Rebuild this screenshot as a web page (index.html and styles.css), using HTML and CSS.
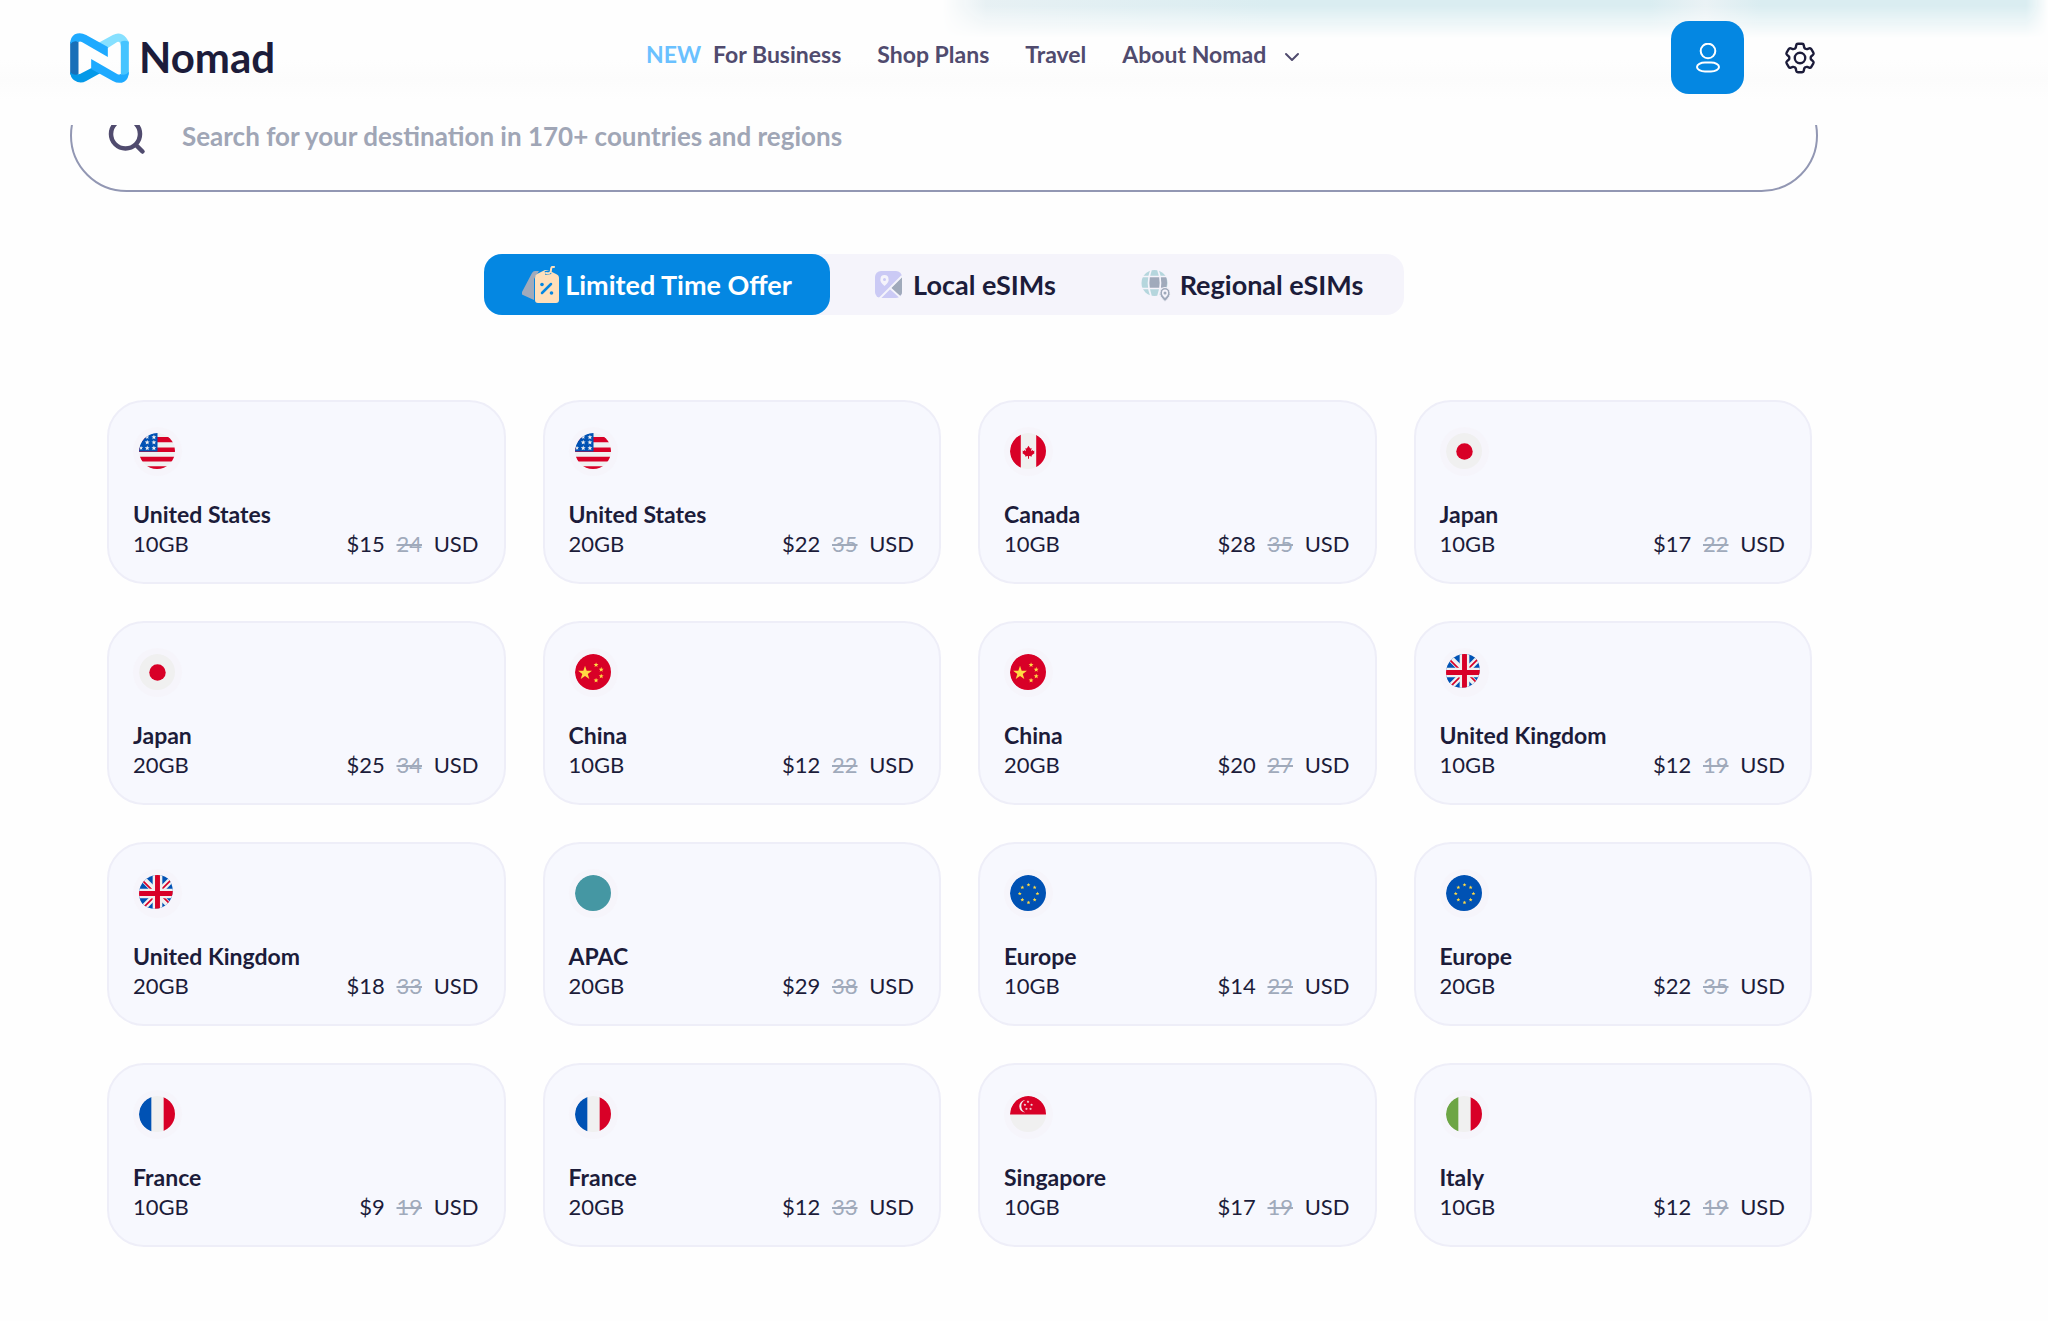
FILE: index.html
```
<!DOCTYPE html>
<html lang="en">
<head>
<meta charset="utf-8">
<meta name="viewport" content="width=device-width, initial-scale=1">
<title>Nomad eSIM</title>
<link rel="stylesheet" href="styles.css">
</head>
<body>
<svg class="sprite" aria-hidden="true">
  <symbol id="star" viewBox="0 0 20 20"><path d="M10 0l2.4 7 7.6.2-6.1 4.7 2.3 7.1-6.2-4.2L3.800 19l2.300-7.100L0 7.200 7.600 7z"/></symbol>
  <symbol id="us" viewBox="0 0 36 36">
    <path fill="#f0f0f0" d="M0 0h36v36H0z"/>
    <path fill="#d80027" d="M0 4h36v5H0zM0 14h36v4.500H0zM0 23h36v4.700H0zM0 32.400h36V36H0z"/>
    <path fill="#0052b4" d="M0 0h18v18H0z"/>
    <g fill="#f0f0f0"><use href="#star" x="12" y="1.500" width="5" height="5"/><use href="#star" x="6" y="2" width="4" height="4"/><use href="#star" x="5.500" y="6.500" width="5" height="5"/><use href="#star" x="12" y="6.500" width="5" height="5"/><use href="#star" x="0" y="12.500" width="4" height="4"/><use href="#star" x="5.500" y="12" width="5" height="5"/><use href="#star" x="12" y="12" width="5" height="5"/></g>
  </symbol>
  <symbol id="ca" viewBox="0 0 36 36">
    <path fill="#f0f0f0" d="M0 0h36v36H0z"/>
    <path fill="#d80027" d="M0 0h10.500v36H0zM25.500 0H36v36H25.500zM18 12.500l-1.700 2.700-1.300-.5.500 3-1.500-1.200-.5 1-1.500-.3.700 1.500-.8.700 3 2.200-.3 1.200 2.900-.4V25h1v-2.600l2.900.4-.3-1.200 3-2.200-.8-.7.700-1.500-1.500.3-.5-1-1.500 1.200.5-3-1.300.5z"/>
  </symbol>
  <symbol id="jp" viewBox="0 0 36 36"><path fill="#f0f0f0" d="M0 0h36v36H0z"/><circle cx="18" cy="18" r="8" fill="#d80027"/></symbol>
  <symbol id="cn" viewBox="0 0 36 36">
    <path fill="#d80027" d="M0 0h36v36H0z"/>
    <g fill="#ffda44"><use href="#star" x="3" y="11.500" width="13.500" height="13.500"/><use href="#star" x="18" y="8" width="5" height="5"/><use href="#star" x="23" y="12.500" width="5" height="5"/><use href="#star" x="23" y="19" width="5" height="5"/><use href="#star" x="18" y="23" width="5" height="5"/></g>
  </symbol>
  <symbol id="gb" viewBox="0 0 36 36">
    <path fill="#0052b4" d="M0 0h36v36H0z"/>
    <path stroke="#f0f0f0" stroke-width="6" d="M0 0l36 36M36 0L0 36"/>
    <path stroke="#d80027" stroke-width="1.600" d="M4 6l10 10M32 4L21 15M32 30L22 20M4 32l11-11"/>
    <path fill="#f0f0f0" d="M13.300 0h9.400v13.300H36v9.400H22.700V36h-9.400V22.700H0v-9.400h13.300z"/>
    <path fill="#d80027" d="M15.600 0h4.800v15.600H36v4.800H20.400V36h-4.800V20.400H0v-4.800h15.600z"/>
  </symbol>
  <symbol id="apac" viewBox="0 0 36 36"><path fill="#4597a3" d="M0 0h36v36H0z"/></symbol>
  <symbol id="eu" viewBox="0 0 36 36">
    <path fill="#0052b4" d="M0 0h36v36H0z"/>
    <g fill="#ffda44"><use href="#star" x="16" y="7.500" width="4" height="4"/><use href="#star" x="22" y="10" width="4" height="4"/><use href="#star" x="24.700" y="16" width="4" height="4"/><use href="#star" x="22" y="22" width="4" height="4"/><use href="#star" x="16" y="24.700" width="4" height="4"/><use href="#star" x="10" y="22" width="4" height="4"/><use href="#star" x="7.500" y="16" width="4" height="4"/><use href="#star" x="10" y="10" width="4" height="4"/></g>
  </symbol>
  <symbol id="fr" viewBox="0 0 36 36"><path fill="#f0f0f0" d="M0 0h36v36H0z"/><path fill="#0052b4" d="M0 0h12v36H0z"/><path fill="#d80027" d="M24 0h12v36H24z"/></symbol>
  <symbol id="it" viewBox="0 0 36 36"><path fill="#f0f0f0" d="M0 0h36v36H0z"/><path fill="#6da544" d="M0 0h12v36H0z"/><path fill="#d80027" d="M24 0h12v36H24z"/></symbol>
  <symbol id="sg" viewBox="0 0 36 36">
    <path fill="#f0f0f0" d="M0 0h36v36H0z"/><path fill="#d80027" d="M0 0h36v18H0z"/>
    <path fill="#f0f0f0" d="M15 4a6 6 0 1 0 0 12 6.500 6.500 0 0 1 0-12z"/>
    <g fill="#f0f0f0"><use href="#star" x="16" y="4" width="3" height="3"/><use href="#star" x="13" y="7" width="3" height="3"/><use href="#star" x="19.500" y="7" width="3" height="3"/><use href="#star" x="14.500" y="11" width="3" height="3"/><use href="#star" x="18.500" y="11" width="3" height="3"/></g>
  </symbol>
</svg>

<header class="header">
  <a class="logo" href="#" aria-label="Nomad home">
    <svg class="logo-mark" viewBox="0 0 176 150" aria-hidden="true">
      <path fill="#86e0ff" d="M84 30l44-24q22-12 40 8 8 8 8 20l-24 4q-2-14-11-11L112 46z"/>
      <path fill="#46c4ff" d="M152 26q12-6 24 0v98q-10 10-24 0z"/>
      <path fill="#196fb8" d="M0 28q12-10 25-2v98q-12 10-25 0z"/>
      <path fill="#0499e8" d="M0 116q8 12 25 8 4 0 10-4l29-15 26 16-42 23q-18 10-36-2Q0 132 0 116z"/>
      <path id="ribbon" fill="#1eaaff" d="M0 34Q0 12 14 4q16-8 34 2l65 36v30L35 27q-6-3-10 0Q10 20 0 34z"/>
      <use href="#ribbon" transform="rotate(180 88 75)"/>
    </svg>
    <span>Nomad</span>
  </a>
  <nav class="nav" aria-label="Main">
    <a href="#"><span class="new">NEW</span> For Business</a>
    <a href="#">Shop Plans</a>
    <a href="#">Travel</a>
    <a href="#">About Nomad
      <svg class="chevron" viewBox="0 0 16 16" fill="none" stroke="currentColor" stroke-width="2" stroke-linecap="round" stroke-linejoin="round" aria-hidden="true"><path d="M2 5l6 6 6-6"/></svg>
    </a>
  </nav>
  <div class="actions">
    <button class="account" type="button" aria-label="Account">
      <svg viewBox="0 0 26 30" fill="none" stroke="#fff" stroke-width="2" aria-hidden="true"><circle cx="13" cy="8" r="7.300"/><rect x="2" y="19.500" width="22" height="9" rx="8" ry="4.500"/></svg>
    </button>
    <button class="settings" type="button" aria-label="Settings">
      <svg viewBox="0 0 24 24" fill="none" stroke="#1c1c3a" stroke-width="1.500" stroke-linejoin="round" aria-hidden="true"><path d="M9.594 3.940c.09-.542.56-.94 1.110-.94h2.593c.55 0 1.020.398 1.110.94l.213 1.281c.063.374.313.686.645.87.074.04.147.083.22.127.325.196.72.257 1.075.124l1.217-.456a1.125 1.125 0 0 1 1.370.49l1.296 2.247a1.125 1.125 0 0 1-.26 1.431l-1.003.827c-.293.241-.438.613-.43.992a7.723 7.723 0 0 1 0 .255c-.008.378.137.75.43.991l1.004.827c.424.35.534.955.26 1.430l-1.298 2.247a1.125 1.125 0 0 1-1.369.491l-1.217-.456c-.355-.133-.75-.072-1.076.124a6.470 6.470 0 0 1-.22.128c-.331.183-.581.495-.644.869l-.213 1.281c-.09.543-.56.94-1.110.94h-2.594c-.55 0-1.019-.398-1.110-.94l-.213-1.281c-.062-.374-.312-.686-.644-.87a6.520 6.520 0 0 1-.22-.127c-.325-.196-.72-.257-1.076-.124l-1.217.456a1.125 1.125 0 0 1-1.369-.49l-1.297-2.247a1.125 1.125 0 0 1 .26-1.431l1.004-.827c.292-.24.437-.613.43-.991a6.932 6.932 0 0 1 0-.255c.007-.38-.138-.751-.43-.992l-1.004-.827a1.125 1.125 0 0 1-.26-1.430l1.297-2.247a1.125 1.125 0 0 1 1.370-.491l1.216.456c.356.133.751.072 1.076-.124.072-.044.146-.086.22-.128.332-.183.582-.495.644-.869l.214-1.280Z"/><circle cx="12" cy="12" r="3.300"/></svg>
    </button>
  </div>
</header>

<main class="main">
  <form class="search" role="search">
    <label class="search-icon" for="destination" aria-label="Destination">
      <svg viewBox="0 0 38 38" fill="none" stroke="#504b6e" stroke-width="4.500" stroke-linecap="round" aria-hidden="true"><circle cx="17.500" cy="17" r="14.500"/><path d="M28.500 28.500l6 6"/></svg>
    </label>
    <input id="destination" type="text" placeholder="Search for your destination in 170+ countries and regions">
  </form>

  <div class="tabs">
    <button class="tab active" type="button">
      <svg class="tab-icon" viewBox="0 0 37 37" aria-hidden="true">
        <path fill="#a0aabb" d="M13 5h4L12 13v21L1 29q-2-1-1-3L10 7q1-2 3-2z"/>
        <path fill="#ffdfba" d="M15 8l8-4h3l8 4q3 1 3 4v22q0 3-3 3H16q-3 0-3-3V12q0-3 2-4z"/>
        <path fill="none" stroke="#0487e2" stroke-width="4" d="M23 7l6-1"/>
        <path fill="none" stroke="#ffdfba" stroke-width="2" stroke-linecap="round" d="M24 7q5 1 5-3t3-3"/>
        <path fill="none" stroke="#0487e2" stroke-width="2.500" stroke-linecap="round" d="M20 27l9-9"/>
        <circle cx="20" cy="18.500" r="1.800" fill="#0487e2"/><circle cx="29.500" cy="27" r="1.800" fill="#0487e2"/>
      </svg>
      Limited Time Offer
    </button>
    <button class="tab" type="button">
      <svg class="tab-icon" viewBox="0 0 37 37" aria-hidden="true">
        <rect x="5" y="5" width="27" height="27" rx="6" fill="#cbcaf5"/>
        <path fill="#a0aabb" d="M32 11v15q0 3-3 4l-8-8z"/>
        <path fill="none" stroke="#f5f4fb" stroke-width="1.800" d="M32 10L9 33M20 22l10 9"/>
        <path fill="#f5f4fb" d="M14.500 20q-5-4-4-7a4 4 0 0 1 8 0q1 3-4 7z"/><circle cx="14.500" cy="13.500" r="1.500" fill="#cbcaf5"/>
      </svg>
      Local eSIMs
    </button>
    <button class="tab" type="button">
      <svg class="tab-icon" viewBox="0 0 37 37" aria-hidden="true">
        <circle cx="17.500" cy="17" r="13" fill="#b5d6dd"/>
        <path fill="#a0aabb" d="M12 11h11v11H12zM24 11h5q2 6 0 11h-5z"/>
        <path fill="none" stroke="#f5f4fb" stroke-width="1.700" d="M4 10.500h27M4 22.500h27M14 4Q9 17 14 30M21 4Q26 17 21 30"/>
        <path fill="#a0aabb" stroke="#f5f4fb" d="M28 35.500q-6-5-5-9a5 5 0 0 1 10 0q1 4-5 9z"/>
        <path fill="#f5f4fb" d="M28 32q-3.500-3-3-5.500a3 3 0 0 1 6 0Q31.500 29 28 32z"/><circle cx="28" cy="27" r="1.500" fill="#a0aabb"/>
      </svg>
      Regional eSIMs
    </button>
  </div>

  <ul class="plans">
    <li><a class="plan" href="#"><svg class="flag" aria-hidden="true"><use href="#us"/></svg><h3>United States</h3><p><span>10GB</span><span class="price">$15 <s>24</s> USD</span></p></a></li>
    <li><a class="plan" href="#"><svg class="flag" aria-hidden="true"><use href="#us"/></svg><h3>United States</h3><p><span>20GB</span><span class="price">$22 <s>35</s> USD</span></p></a></li>
    <li><a class="plan" href="#"><svg class="flag" aria-hidden="true"><use href="#ca"/></svg><h3>Canada</h3><p><span>10GB</span><span class="price">$28 <s>35</s> USD</span></p></a></li>
    <li><a class="plan" href="#"><svg class="flag" aria-hidden="true"><use href="#jp"/></svg><h3>Japan</h3><p><span>10GB</span><span class="price">$17 <s>22</s> USD</span></p></a></li>
    <li><a class="plan" href="#"><svg class="flag" aria-hidden="true"><use href="#jp"/></svg><h3>Japan</h3><p><span>20GB</span><span class="price">$25 <s>34</s> USD</span></p></a></li>
    <li><a class="plan" href="#"><svg class="flag" aria-hidden="true"><use href="#cn"/></svg><h3>China</h3><p><span>10GB</span><span class="price">$12 <s>22</s> USD</span></p></a></li>
    <li><a class="plan" href="#"><svg class="flag" aria-hidden="true"><use href="#cn"/></svg><h3>China</h3><p><span>20GB</span><span class="price">$20 <s>27</s> USD</span></p></a></li>
    <li><a class="plan" href="#"><svg class="flag" aria-hidden="true"><use href="#gb"/></svg><h3>United Kingdom</h3><p><span>10GB</span><span class="price">$12 <s>19</s> USD</span></p></a></li>
    <li><a class="plan" href="#"><svg class="flag" aria-hidden="true"><use href="#gb"/></svg><h3>United Kingdom</h3><p><span>20GB</span><span class="price">$18 <s>33</s> USD</span></p></a></li>
    <li><a class="plan" href="#"><svg class="flag" aria-hidden="true"><use href="#apac"/></svg><h3>APAC</h3><p><span>20GB</span><span class="price">$29 <s>38</s> USD</span></p></a></li>
    <li><a class="plan" href="#"><svg class="flag" aria-hidden="true"><use href="#eu"/></svg><h3>Europe</h3><p><span>10GB</span><span class="price">$14 <s>22</s> USD</span></p></a></li>
    <li><a class="plan" href="#"><svg class="flag" aria-hidden="true"><use href="#eu"/></svg><h3>Europe</h3><p><span>20GB</span><span class="price">$22 <s>35</s> USD</span></p></a></li>
    <li><a class="plan" href="#"><svg class="flag" aria-hidden="true"><use href="#fr"/></svg><h3>France</h3><p><span>10GB</span><span class="price">$9 <s>19</s> USD</span></p></a></li>
    <li><a class="plan" href="#"><svg class="flag" aria-hidden="true"><use href="#fr"/></svg><h3>France</h3><p><span>20GB</span><span class="price">$12 <s>33</s> USD</span></p></a></li>
    <li><a class="plan" href="#"><svg class="flag" aria-hidden="true"><use href="#sg"/></svg><h3>Singapore</h3><p><span>10GB</span><span class="price">$17 <s>19</s> USD</span></p></a></li>
    <li><a class="plan" href="#"><svg class="flag" aria-hidden="true"><use href="#it"/></svg><h3>Italy</h3><p><span>10GB</span><span class="price">$12 <s>19</s> USD</span></p></a></li>
  </ul>
</main>
</body>
</html>
```

FILE: styles.css
```
* { box-sizing: border-box; }

body {
  margin: 0;
  background: #fefefe;
  color: #1c1c3a;
  font-family: Lato, "Liberation Sans", sans-serif;
  font-size: 22px;
  line-height: 29px;
}

a { color: inherit; text-decoration: none; }
button { border: 0; padding: 0; background: none; color: inherit; font: inherit; cursor: pointer; }
svg { display: block; }
.sprite { position: absolute; width: 0; height: 0; }

/* Sticky header, lies over the search box */
.header {
  position: sticky;
  top: 0;
  z-index: 2;
  display: flex;
  align-items: flex-start;
  height: 125px;
  padding: 21px 229px 0 70px;
  background: linear-gradient(#fefefe 60px, #fcfcfc 80px, #fefefe 100px);
}

.header::before {
  content: "";
  position: absolute;
  z-index: -1;
  inset: 0 0 auto 46%;
  height: 40px;
  background: linear-gradient(90deg, #e9f1f4, #daedf1 30%, #daedf1 64%, #eaf2f5 69%, #daedf1 74%);
  mask-image: linear-gradient(#000 6px, transparent 38px), linear-gradient(90deg, transparent, #000 4%, #000 98%, transparent);
  mask-composite: intersect;
}

.logo {
  display: flex;
  align-items: center;
  gap: 10px;
  height: 73px;
  font-size: 42px;
  font-weight: 700;
}
.logo-mark { width: 59px; height: 50px; }

.nav {
  flex: 1;
  display: flex;
  justify-content: center;
  gap: 36px;
  padding-top: 19px;
  color: #504b6e;
  font-size: 23px;
  font-weight: 700;
}
.nav a { display: flex; align-items: center; white-space: nowrap; }
.new { margin-right: 12px; color: #6ac1ff; }
.chevron { width: 16px; height: 16px; margin: 4px 0 0 18px; }

.actions { display: flex; align-items: center; gap: 37px; }
.account {
  display: grid;
  place-items: center;
  width: 73px;
  height: 73px;
  border-radius: 18px;
  background: #0487e2;
}
.account svg { width: 26px; height: 30px; }
.settings svg { width: 38px; height: 38px; }

.main { margin-top: -46px; padding: 0 230px 75px 70px; }

.search {
  display: flex;
  align-items: center;
  height: 113px;
  padding: 0 36px;
  border: 2px solid #9297b3;
  border-radius: 57px;
}
.search-icon svg { width: 38px; height: 38px; }
.search input {
  flex: 1;
  min-width: 0;
  margin-left: 36px;
  padding: 0;
  border: 0;
  outline: 0;
  background: none;
  font: 700 26px/36px Lato, "Liberation Sans", sans-serif;
}
.search input::placeholder { color: #a0a6b6; opacity: 1; }

.tabs {
  display: grid;
  grid-template-columns: 346fr 266fr 308fr;
  max-width: 920px;
  height: 61px;
  margin: 62px auto 85px;
  border-radius: 18px;
  background: #f5f4fb;
}
.tab {
  display: flex;
  align-items: center;
  justify-content: center;
  gap: 6px;
  border-radius: 18px;
  font-size: 27px;
  font-weight: 700;
  white-space: nowrap;
}
.tab.active { background: #0487e2; color: #fff; }
.tab-icon { width: 37px; height: 37px; }

.plans {
  display: grid;
  grid-template-columns: repeat(4, 1fr);
  gap: 37px;
  margin: 0;
  padding: 0 6px 0 37px;
  list-style: none;
}
.plan {
  display: block;
  padding: 25px 25px 24px 24px;
  border: 2px solid #eeeef8;
  border-radius: 37px;
  background: #f7f8fe;
}
.flag {
  width: 49px;
  height: 49px;
  padding: 6px;
  border-radius: 50%;
  background: #f6f5fb;
}
.flag use { clip-path: circle(18px at 18px 18px); }
.plan h3 { margin: 24px 0 0; font-size: 23px; font-weight: 700; }
.plan p { display: flex; justify-content: space-between; margin: 0; }
.price s { margin: 0 6px; color: #a0aabb; }
```
